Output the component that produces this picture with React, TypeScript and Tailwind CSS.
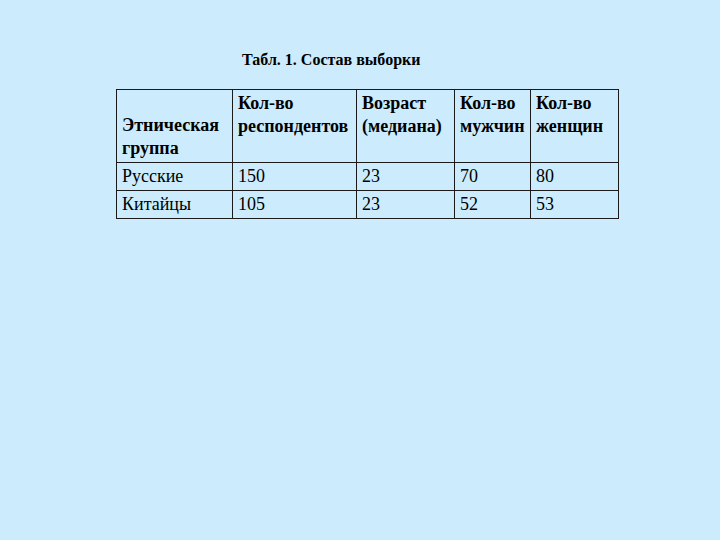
import React from 'react';

const rows = [
  ['Русские', '150', '23', '70', '80'],
  ['Китайцы', '105', '23', '52', '53'],
];

export default function App() {
  return (
    <div className="w-[720px] h-[540px] bg-[#ccecfd] font-['Liberation_Serif',serif] text-black">
      <div className="pt-[50px] pl-[242px] text-[16px] font-bold leading-[20px]">Табл. 1. Состав выборки</div>
      <table className="ml-[116px] mt-[19px] border-collapse border border-[#1a1a1a] text-[18px] leading-[23px]">
        <colgroup>
          <col className="w-[116px]" />
          <col className="w-[124px]" />
          <col className="w-[98px]" />
          <col className="w-[76px]" />
          <col className="w-[88px]" />
        </colgroup>
        <thead>
          <tr className="h-[73px] font-bold">
            <th className="border border-[#1a1a1a] px-[5px] pb-[2px] text-left align-bottom font-bold">Этническая<br />группа</th>
            <th className="border border-[#1a1a1a] px-[5px] pt-[2px] text-left align-top font-bold">Кол-во<br />респондентов</th>
            <th className="border border-[#1a1a1a] px-[5px] pt-[2px] text-left align-top font-bold">Возраст<br />(медиана)</th>
            <th className="border border-[#1a1a1a] px-[5px] pt-[2px] text-left align-top font-bold">Кол-во<br />мужчин</th>
            <th className="border border-[#1a1a1a] px-[5px] pt-[2px] text-left align-top font-bold">Кол-во<br />женщин</th>
          </tr>
        </thead>
        <tbody>
          {rows.map((r) => (
            <tr key={r[0]} className="h-[28px]">
              {r.map((c, i) => (
                <td key={i} className="border border-[#1a1a1a] px-[5px] align-middle">{c}</td>
              ))}
            </tr>
          ))}
        </tbody>
      </table>
    </div>
  );
}
